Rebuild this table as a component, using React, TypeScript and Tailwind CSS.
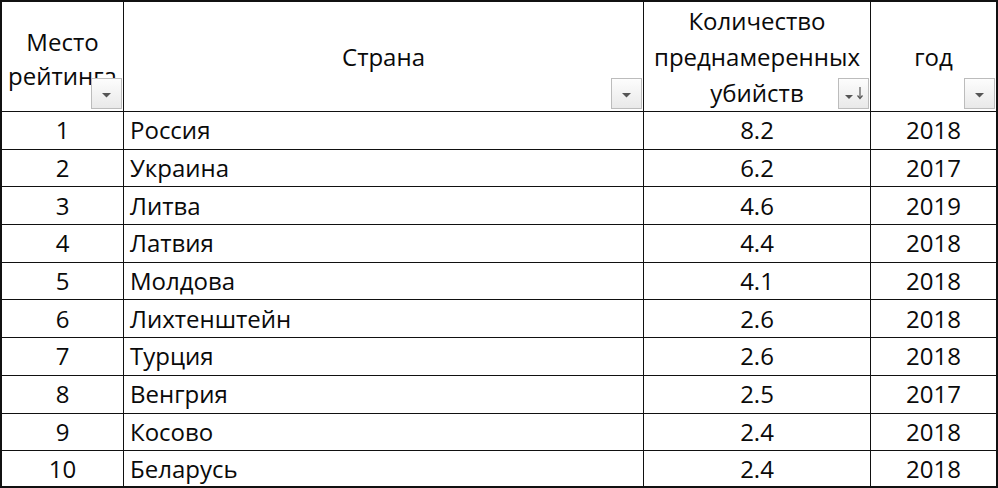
const rows = [
  { place: 1, country: 'Россия', rate: '8.2', year: 2018 },
  { place: 2, country: 'Украина', rate: '6.2', year: 2017 },
  { place: 3, country: 'Литва', rate: '4.6', year: 2019 },
  { place: 4, country: 'Латвия', rate: '4.4', year: 2018 },
  { place: 5, country: 'Молдова', rate: '4.1', year: 2018 },
  { place: 6, country: 'Лихтенштейн', rate: '2.6', year: 2018 },
  { place: 7, country: 'Турция', rate: '2.6', year: 2018 },
  { place: 8, country: 'Венгрия', rate: '2.5', year: 2017 },
  { place: 9, country: 'Косово', rate: '2.4', year: 2018 },
  { place: 10, country: 'Беларусь', rate: '2.4', year: 2018 },
]

// Excel-style autofilter button
const FilterButton = ({ sorted = false }: { sorted?: boolean }) => (
  <div className="absolute right-[1px] bottom-[2px] w-[31px] h-[31px] border border-[#bcbcbc] bg-linear-to-b from-[#fdfdfd] to-[#e9e9e9]">
    <svg width="29" height="29" viewBox="0 0 29 29" className="block">
      {sorted ? (
        <>
          <polygon points="6,16 14,16 10,20" fill="#555" />
          <line x1="21" y1="8" x2="21" y2="19" stroke="#555" strokeWidth="1.2" />
          <polyline points="18.5,16.5 21,19.5 23.5,16.5" fill="none" stroke="#555" strokeWidth="1.2" />
        </>
      ) : (
        <polygon points="10,14 19,14 14.5,18.5" fill="#555" />
      )}
    </svg>
  </div>
)

const cols = 'grid grid-cols-[122px_520px_227px_1fr]'
const cell = 'border-r border-[#111]'

export default function App() {
  return (
    <div
      className="w-[998px] h-[488px] bg-white border-2 border-[#111] flex flex-col text-[#0a0a0a] text-[24px] overflow-hidden"
      style={{ fontFamily: '"Open Sans", "Noto Sans", sans-serif' }}
    >
      {/* Header */}
      <div className={`${cols} h-[110px] shrink-0 border-b border-[#111] leading-[36px]`}>
        <div className={`${cell} relative flex flex-col items-center justify-center pt-[4px] leading-[34px] whitespace-nowrap overflow-hidden`}>
          <span>Место</span>
          <span>рейтинга</span>
          <FilterButton />
        </div>
        <div className={`${cell} relative flex items-center justify-center`}>
          <span>Страна</span>
          <FilterButton />
        </div>
        <div className={`${cell} relative flex flex-col items-center justify-center whitespace-nowrap`}>
          <span>Количество</span>
          <span>преднамеренных</span>
          <span>убийств</span>
          <FilterButton sorted />
        </div>
        <div className="relative flex items-center justify-center">
          <span>год</span>
          <FilterButton />
        </div>
      </div>

      {/* Body */}
      {rows.map((r, i) => (
        <div
          key={r.place}
          className={`${cols} ${i < rows.length - 1 ? 'h-[37.7px] shrink-0 border-b border-[#111]' : 'flex-1'}`}
        >
          <div className={`${cell} flex items-center justify-center`}>{r.place}</div>
          <div className={`${cell} flex items-center pl-[6px]`}>{r.country}</div>
          <div className={`${cell} flex items-center justify-center`}>{r.rate}</div>
          <div className="flex items-center justify-center">{r.year}</div>
        </div>
      ))}
    </div>
  )
}
